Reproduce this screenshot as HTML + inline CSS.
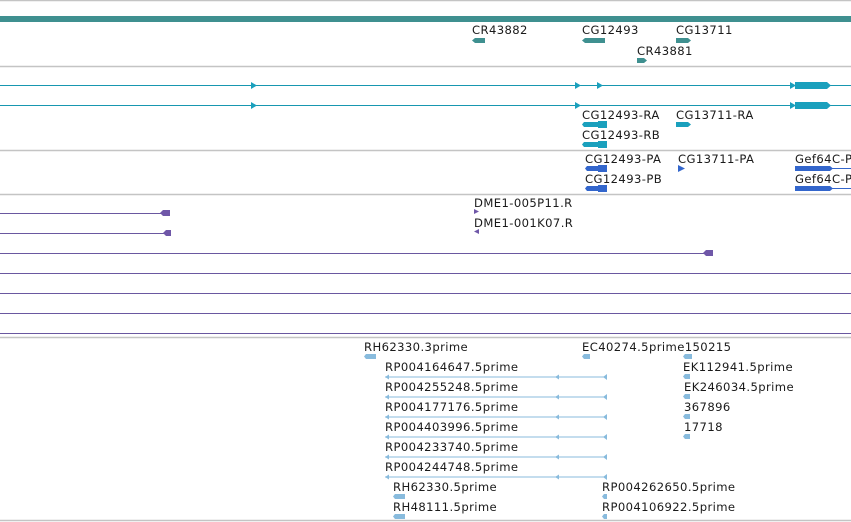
<!DOCTYPE html>
<html><head><style>
html,body{margin:0;padding:0;background:#fff;width:851px;height:522px;overflow:hidden}
svg text{font-family:"DejaVu Sans","Liberation Sans",sans-serif;font-size:11.6px;letter-spacing:0.4px;fill:#1a1a1a}
</style></head><body>
<svg width="851" height="522" xmlns="http://www.w3.org/2000/svg">
<g stroke="#c4c4c4" stroke-width="1.5">
<line x1="0" y1="0.5" x2="851" y2="0.5"/><line x1="0" y1="66.5" x2="851" y2="66.5"/>
<line x1="0" y1="150.5" x2="851" y2="150.5"/><line x1="0" y1="194.5" x2="851" y2="194.5"/>
<line x1="0" y1="337.5" x2="851" y2="337.5"/><line x1="0" y1="520.5" x2="851" y2="520.5"/>
</g>
<rect x="0" y="16" width="851" height="6" fill="#3f9090"/>
<g fill="#3f9090">
<polygon points="475,38 485,38 485,43 475,43 472,40.5"/>
<polygon points="585,38 605,38 605,43 585,43 582,40.5"/>
<polygon points="676,38 688,38 691,40.5 688,43 676,43"/>
<polygon points="637,58 644,58 647,60.5 644,63 637,63"/>
</g>
<text x="472" y="34">CR43882</text><text x="582" y="34">CG12493</text><text x="676" y="34">CG13711</text><text x="637" y="55">CR43881</text>
<g stroke="#1797b0" stroke-width="1"><line x1="0" y1="85.5" x2="851" y2="85.5"/><line x1="0" y1="105.5" x2="851" y2="105.5"/></g>
<g fill="#1aa0bd">
<polygon points="251,82 257,85.5 251,89"/><polygon points="575,82 581,85.5 575,89"/><polygon points="597,82 603,85.5 597,89"/><polygon points="790,82 796,85.5 790,89"/>
<polygon points="795,82 827,82 831,85.5 827,89 795,89"/>
<polygon points="251,102 257,105.5 251,109"/><polygon points="575,102 581,105.5 575,109"/><polygon points="790,102 796,105.5 790,109"/>
<polygon points="795,102 827,102 831,105.5 827,109 795,109"/>
<polygon points="584,122 598,122 598,121 607,121 607,128 598,128 598,127 584,127 582,124.5"/>
<polygon points="584,142 598,142 598,141 607,141 607,148 598,148 598,147 584,147 582,144.5"/>
<polygon points="676,122 688,122 691,124.5 688,127 676,127"/>
</g>
<text x="582" y="119">CG12493-RA</text><text x="676" y="119">CG13711-RA</text><text x="582" y="139">CG12493-RB</text>
<g fill="#3366cc">
<polygon points="587,166 598,166 598,165 607,165 607,172 598,172 598,171 587,171 585,168.5"/>
<polygon points="587,186 598,186 598,185 607,185 607,192 598,192 598,191 587,191 585,188.5"/>
<polygon points="678,165 685,168.5 678,172"/>
<polygon points="795,166 830,166 833,168.5 830,171 795,171"/>
<polygon points="795,186 830,186 833,188.5 830,191 795,191"/>
</g>
<g stroke="#3366cc"><line x1="830" y1="168.5" x2="851" y2="168.5"/><line x1="830" y1="188.5" x2="851" y2="188.5"/></g>
<text x="585" y="163">CG12493-PA</text><text x="678" y="163">CG13711-PA</text><text x="795" y="163">Gef64C-PA</text>
<text x="585" y="183">CG12493-PB</text><text x="795" y="183">Gef64C-PB</text>
<g stroke="#6a58a0" stroke-width="1">
<line x1="0" y1="213.5" x2="163" y2="213.5"/><line x1="0" y1="233.5" x2="166" y2="233.5"/><line x1="0" y1="253.5" x2="706" y2="253.5"/>
<line x1="0" y1="273.5" x2="851" y2="273.5"/><line x1="0" y1="293.5" x2="851" y2="293.5"/><line x1="0" y1="313.5" x2="851" y2="313.5"/><line x1="0" y1="333.5" x2="851" y2="333.5"/>
</g>
<g fill="#6f57a8">
<polygon points="163,210 170,210 170,216 163,216 160,213"/><polygon points="166,230 171,230 171,236 166,236 163,233"/><polygon points="706,250 713,250 713,256 706,256 703,253"/>
<polygon points="474,209 479,211.5 474,214"/><polygon points="479,229 474,231.5 479,234"/>
</g>
<text x="474" y="207">DME1-005P11.R</text><text x="474" y="227">DME1-001K07.R</text>
<g fill="#88bbdd">
<polygon points="366,354 376,354 376,359 366,359 364,356.5"/>
<polygon points="584,354 590,354 590,359 584,359 582,356.5"/>
<polygon points="685,354 692,354 692,359 685,359 683,356.5"/>
<polygon points="685,374 690,374 690,379 685,379 683,376.5"/>
<polygon points="685,394 690,394 690,399 685,399 683,396.5"/>
<polygon points="685,414 690,414 690,419 685,419 683,416.5"/>
<polygon points="685,434 690,434 690,439 685,439 683,436.5"/>
<polygon points="395,494 405,494 405,499 395,499 393,496.5"/>
<polygon points="395,514 405,514 405,519 395,519 393,516.5"/>
<polygon points="604,494 607,494 607,499 604,499 602,496.5"/>
<polygon points="604,514 607,514 607,519 604,519 602,516.5"/>
</g>
<g stroke="#88bbdd">
<line x1="385" y1="377" x2="607" y2="377"/><line x1="385" y1="397" x2="607" y2="397"/><line x1="385" y1="417" x2="607" y2="417"/>
<line x1="385" y1="437" x2="607" y2="437"/><line x1="385" y1="457" x2="607" y2="457"/><line x1="385" y1="477" x2="607" y2="477"/>
</g>
<g fill="#88bbdd">
<polygon points="385,377 389,374.5 389,379.5"/><polygon points="555,377 559,374.5 559,379.5"/><polygon points="603,377 607,374 607,380"/>
<polygon points="385,397 389,394.5 389,399.5"/><polygon points="555,397 559,394.5 559,399.5"/><polygon points="603,397 607,394 607,400"/>
<polygon points="385,417 389,414.5 389,419.5"/><polygon points="555,417 559,414.5 559,419.5"/><polygon points="603,417 607,414 607,420"/>
<polygon points="385,437 389,434.5 389,439.5"/><polygon points="555,437 559,434.5 559,439.5"/><polygon points="603,437 607,434 607,440"/>
<polygon points="385,457 389,454.5 389,459.5"/><polygon points="555,457 559,454.5 559,459.5"/><polygon points="603,457 607,454 607,460"/>
<polygon points="385,477 389,474.5 389,479.5"/><polygon points="555,477 559,474.5 559,479.5"/><polygon points="603,477 607,474 607,480"/>
</g>
<text x="364" y="351">RH62330.3prime</text><text x="582" y="351">EC40274.5prime150215</text>
<text x="385" y="371">RP004164647.5prime</text><text x="683" y="371">EK112941.5prime</text>
<text x="385" y="391">RP004255248.5prime</text><text x="684" y="391">EK246034.5prime</text>
<text x="385" y="411">RP004177176.5prime</text><text x="684" y="411">367896</text>
<text x="385" y="431">RP004403996.5prime</text><text x="684" y="431">17718</text>
<text x="385" y="451">RP004233740.5prime</text>
<text x="385" y="471">RP004244748.5prime</text>
<text x="393" y="491">RH62330.5prime</text><text x="602" y="491">RP004262650.5prime</text>
<text x="393" y="511">RH48111.5prime</text><text x="602" y="511">RP004106922.5prime</text>
</svg>
</body></html>
